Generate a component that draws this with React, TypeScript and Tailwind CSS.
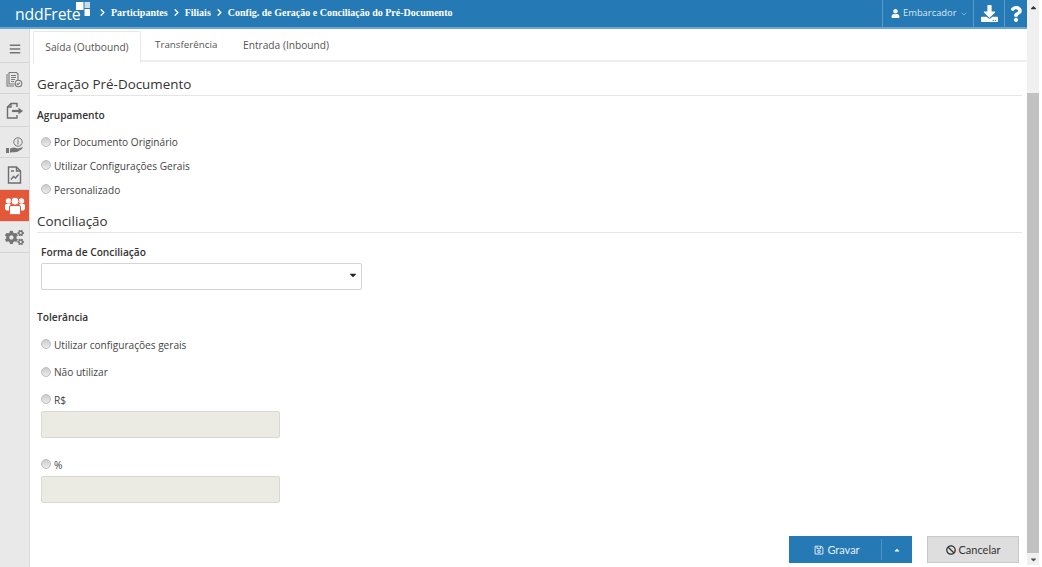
import { ChevronDown, ChevronRight } from "lucide-react";
import { FaUser, FaDownload, FaQuestion, FaCogs, FaCaretUp, FaCaretDown, FaBars, FaBan, FaRegSave } from "react-icons/fa";

function Radio({ label, className = "" }: { label: string; className?: string }) {
  return (
    <label className={`flex items-center h-[18px] ${className}`}>
      <span className="w-[10px] h-[10px] rounded-full bg-gradient-to-b from-[#cccccc] to-[#ebebeb] border border-[#bdbdbd] -mt-[3px] ml-[4px] mr-[3px] shrink-0" />
      <span>{label}</span>
    </label>
  );
}

function SideItem({ children, active, h }: { children: React.ReactNode; active?: boolean; h: string }) {
  return (
    <div className={`${h} flex items-center justify-center border-b border-[#d4d4d4] ${active ? "bg-[#e4583a] text-white" : "text-[#757575]"}`}>
      {children}
    </div>
  );
}

const Crumb = ({ t }: { t: string }) => (
  <span className="flex items-center">
    <ChevronRight size={11} strokeWidth={3} className="mx-[3px] text-white" />
    <span>{t}</span>
  </span>
);

export default function App() {
  return (
    <div className="w-[1042px] h-[567px] overflow-hidden bg-white flex text-[#444] text-[10.2px] font-['Open_Sans',sans-serif]">
      <div className="w-[1027px] shrink-0 flex flex-col">
        <header className="h-[29px] shrink-0 flex bg-[#2579b4] border-b-[2px] border-[#6ea6cf] items-stretch text-white">
          <div className="w-[96px] relative pl-[15px] flex items-center">
            <span className="text-[15.800px] tracking-[-0.2px] mt-[3px] leading-none">nddFrete</span>
            <svg className="absolute left-[76px] top-[1px]" width="15" height="15" viewBox="0 0 15 15" fill="white">
              <rect x="0" y="1" width="7.500" height="8" />
              <rect x="8.500" y="1" width="5.500" height="6" opacity="0.75" />
              <rect x="8.500" y="8" width="5.500" height="7" />
            </svg>
          </div>
          <div className="flex items-center font-bold font-['Liberation_Serif',serif] text-[10px] -ml-[2px] -mt-[2px]">
            <Crumb t="Participantes" />
            <Crumb t="Filiais" />
            <Crumb t="Config. de Geração e Conciliação do Pré-Documento" />
          </div>
          <div className="flex-1" />
          <div className="w-[91px] border-l border-[#5a9bca] flex items-center pl-[8px] text-[#d9e8f3] text-[9.400px]">
            <FaUser size={9} className="text-white mr-[3px]" />
            <span>Embarcador</span>
            <ChevronDown size={8} className="ml-[3px] text-[#a9cbe3]" />
          </div>
          <div className="w-[31px] border-l border-[#5a9bca] flex items-center justify-center">
            <FaDownload size={17} />
          </div>
          <div className="w-[23px] border-l border-[#5a9bca] flex items-center justify-center">
            <FaQuestion size={16} />
          </div>
        </header>
        <div className="flex-1 flex min-h-0">
          <aside className="w-[30px] shrink-0 bg-[#e9e9e9] border-r border-[#dcdcdc]">
            <SideItem h="h-[34px] pt-[6px]"><FaBars size={12} /></SideItem>
            <SideItem h="h-[31px] pt-[3px]">
              <svg width="17" height="17" viewBox="0 0 17 17" fill="none" stroke="#7a7a7a" strokeWidth="1.1">
                <path d="M3 1.500h7.500l1.500 1.500v6.500M3 1.500v11.500h5.500M5 4.500h5M5 6.500h5M5 8.500h4M5 10.500h3" />
                <path d="M1 3v12h7" />
                <circle cx="12.500" cy="12.500" r="3.300" />
                <path d="M10.800 12.500l1.200 1.200 2-2.200" />
              </svg>
            </SideItem>
            <SideItem h="h-[33px]">
              <svg width="18" height="17" viewBox="0 0 18 17" fill="none" stroke="#6e6e6e" strokeWidth="1.400">
                <path d="M11 5V1.500H5L1.500 5v11h9.500v-3" />
                <path d="M5 1.500V5H1.500" />
                <path d="M6 9h7.500" strokeWidth="2.200" />
                <path d="M12.500 5.800L17 9l-4.500 3.200z" fill="#6e6e6e" stroke="none" />
              </svg>
            </SideItem>
            <SideItem h="h-[31px] pt-[6px]">
              <svg width="20" height="17" viewBox="0 0 20 17" fill="#757575">
                <circle cx="13" cy="5" r="4.200" fill="none" stroke="#757575" strokeWidth="1" />
                <rect x="12.500" y="2.500" width="1" height="5" />
                <path d="M1 11h3v5H1zM5 11.500l4-1 4 1 5-1.500-1 2-5 3-7 .5z" />
              </svg>
            </SideItem>
            <SideItem h="h-[32px] pt-[3px]">
              <svg width="15" height="18" viewBox="0 0 15 18" fill="none" stroke="#6e6e6e" strokeWidth="1.400">
                <path d="M1.500 1h8l4 4v12h-12zM9.500 1v4h4" />
                <path d="M4 5h3M4 13.500l2.500-3 2 1.500 3-3.500" />
              </svg>
            </SideItem>
            <SideItem h="h-[32px]" active>
              <svg width="20" height="18" viewBox="0 0 20 18" fill="white">
                <circle cx="3.500" cy="4" r="2.700" />
                <circle cx="16.500" cy="4" r="2.700" />
                <path d="M0 8.500q0-1.500 1.500-1.500h4v6.500H1.500L0 12zM14.500 7h4q1.500 0 1.500 1.500V12l-1.500 1.500h-4z" />
                <g stroke="#e4583a" strokeWidth="1">
                  <circle cx="10" cy="4.200" r="4" />
                  <path d="M6 8.500h8q1.500 0 1.500 1.500v6.500l-1 1.200h-9l-1-1.200V10Q4.500 8.500 6 8.500z" />
                </g>
              </svg>
            </SideItem>
            <SideItem h="h-[31px]"><FaCogs size={19} /></SideItem>
          </aside>
          <main className="flex-1 min-w-0 relative pl-[3px]">
            <nav className="h-[33px] pt-[2px] flex border-b-[2px] border-[#eeeeee] text-[#555]">
              <div className="w-[108px] h-[32px] bg-white border border-[#e8e8e8] border-b-0 rounded-t-[2px] flex items-center justify-center">Saída (Outbound)</div>
              <div className="w-[102px] pl-[14px] flex items-center text-[9.800px]">Transferência</div>
              <div className="flex items-center">Entrada (Inbound)</div>
            </nav>
            <section className="pl-[4px] pr-[5px]">
              <h2 className="h-[34px] pt-[12px] text-[13.400px] leading-[20px] text-[#333] font-medium border-b border-[#e5e5e5]">Geração Pré-Documento</h2>
              <h3 className="mt-[12px] leading-[15px] font-semibold text-[#333]">Agrupamento</h3>
              <div className="mt-[11px] flex flex-col gap-[5.750px] text-[10.100px]">
                <Radio label="Por Documento Originário" />
                <Radio label="Utilizar Configurações Gerais" />
                <Radio label="Personalizado" />
              </div>
              <h2 className="mt-[11px] h-[22px] text-[13.400px] leading-[20px] text-[#333] font-medium border-b border-[#e5e5e5]">Conciliação</h2>
              <div className="pl-[4px] mt-[12px]">
                <div className="font-semibold text-[#333] leading-[15px]">Forma de Conciliação</div>
                <div className="mt-[3px] w-[321px] h-[27px] border border-[#d4d4d4] rounded-[2px] flex items-center justify-end pr-[3px]">
                  <FaCaretDown size={10} className="text-[#222] -mt-[3px]" />
                </div>
              </div>
              <h3 className="mt-[20px] leading-[15px] font-semibold text-[#333]">Tolerância</h3>
              <div className="mt-[12px] text-[10.100px]">
                <Radio label="Utilizar configurações gerais" />
                <Radio label="Não utilizar" className="mt-[9.500px]" />
                <Radio label="R$" className="mt-[9.500px]" />
                <div className="mt-[1px] ml-[4px] w-[239px] h-[27px] bg-[#ebebe4] border border-[#d9d9d2] rounded-[2px]" />
                <Radio label="%" className="mt-[19px]" />
                <div className="mt-[1px] ml-[4px] w-[239px] h-[27px] bg-[#ebebe4] border border-[#d9d9d2] rounded-[2px]" />
              </div>
            </section>
            <div className="absolute right-[8px] bottom-[4px] flex gap-[15px] font-['Lato',sans-serif] text-[11px]">
              <div className="w-[123px] h-[27px] bg-[#2579b4] text-[#e3eef6] flex items-center">
                <div className="w-[92px] pl-[4px] pt-[1px] flex items-center justify-center gap-[3px]"><FaRegSave size={10} />Gravar</div>
                <div className="h-[21px] border-l border-[#4f93c4] flex-1 flex items-center justify-center"><FaCaretUp size={8} className="text-white" /></div>
              </div>
              <div className="w-[92px] h-[27px] pt-[1px] bg-[#dedede] border border-[#c9c9c9] text-[#333] flex items-center justify-center gap-[3px]">
                <FaBan size={10} />Cancelar
              </div>
            </div>
          </main>
        </div>
      </div>
      <div className="w-[12px] shrink-0 bg-[#f0f0f0] flex flex-col items-center mb-[2px]">
        <div className="h-[14px] flex items-center"><FaCaretUp size={9} className="text-[#333]" /></div>
        <div className="w-full h-[79px]" />
        <div className="w-full flex-1 bg-[#c1c1c1]" />
        <div className="h-[12px] flex items-center"><FaCaretDown size={9} className="text-[#505050]" /></div>
      </div>
    </div>
  );
}
